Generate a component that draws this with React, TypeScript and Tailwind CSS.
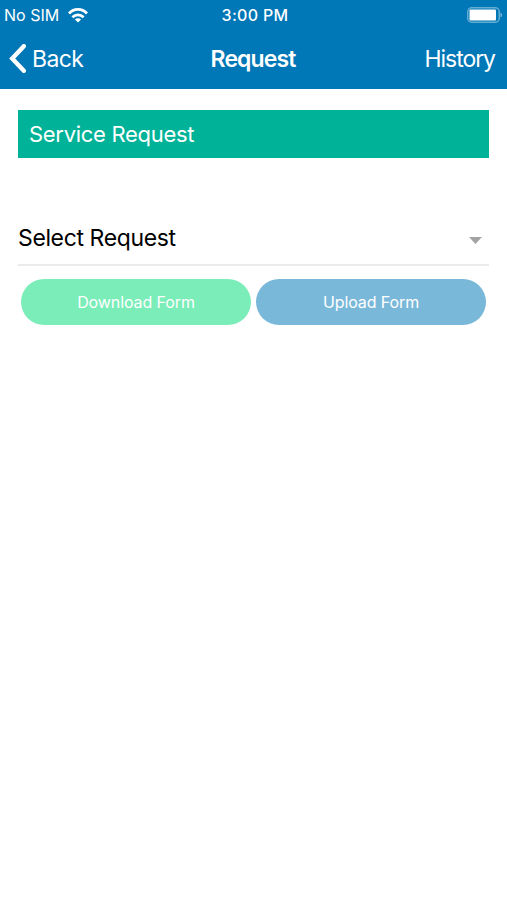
const WifiIcon = () => (
  <svg width="20" height="15" viewBox="0 0 20 15" fill="none" stroke="white" strokeWidth="2.8">
    <path d="M1 5.5C6 .1 14 .1 19 5.5" />
    <path d="M4.4 9.2c3.2-3.2 8-3.2 11.2 0" />
    <path d="M10 14.5 6.9 11.4c1.8-1.6 4.4-1.6 6.2 0z" fill="white" stroke="none" />
  </svg>
)

const BatteryIcon = () => (
  <svg width="36" height="16" viewBox="0 0 36 16" fill="none">
    <rect x="0.75" y="0.75" width="31.5" height="14.5" rx="4" stroke="white" strokeOpacity="0.4" strokeWidth="1.5" />
    <rect x="2.5" y="2.5" width="26.5" height="11" rx="1" fill="white" />
    <path d="M33.5 5.5c2.2.8 2.2 4.2 0 5z" fill="white" fillOpacity="0.45" />
  </svg>
)

const StatusBar = () => (
  <div className="grid h-[30px] grid-cols-3 items-center pr-[4px] pl-[4px] text-[16px]">
    <div className="flex items-center gap-[9px]">
      <span>No SIM</span>
      <WifiIcon />
    </div>
    <span className="pl-[3px] text-center font-medium tracking-[0.3px]">3:00 PM</span>
    <div className="flex justify-end">
      <BatteryIcon />
    </div>
  </div>
)

const NavBar = () => (
  <nav className="grid h-[58px] grid-cols-3 items-center pr-[12px] pl-[9px] text-[23px]">
    <button className="flex items-center gap-[6px] tracking-[-0.6px]">
      <svg
        className="mb-[2px]"
        width="17"
        height="29"
        viewBox="0 0 17 29"
        fill="none"
        stroke="white"
        strokeWidth="4.4"
        strokeLinecap="round"
      >
        <path d="M14.8 2.2 3.2 14.5l11.6 12.3" />
      </svg>
      Back
    </button>
    <h1 className="pl-[2px] text-center font-semibold tracking-[-0.9px]">Request</h1>
    <button className="text-right tracking-[-1.05px]">History</button>
  </nav>
)

const App = () => (
  <div className="min-h-screen bg-white font-['Inter',sans-serif]">
    <header className="h-[88.5px] bg-[#0077b6] text-white">
      <StatusBar />
      <NavBar />
    </header>
    <main className="px-[18px] pt-[21.5px]">
      <h2 className="flex h-[48px] items-center bg-[#00b398] pl-[11px] text-[22px] tracking-[-0.3px] text-white">
        Service Request
      </h2>
      <button className="mt-[53px] flex h-[55px] w-full items-center justify-between border-b-2 border-[#ebebeb] pt-[2px] pr-[7px] text-[23px] tracking-[-0.38px] text-black">
        Select Request
        <svg className="mt-[3px]" width="13" height="7" viewBox="0 0 13 7">
          <path d="M0 0h13L6.5 7z" fill="#a3a3a3" />
        </svg>
      </button>
      <div className="mt-[13px] grid grid-cols-2 gap-[5px] px-[3px] text-[16px] tracking-[-0.1px] text-white">
        <button className="h-[46px] rounded-full bg-[#7aedb8]">Download Form</button>
        <button className="h-[46px] rounded-full bg-[#7ab8da]">Upload Form</button>
      </div>
    </main>
  </div>
)

export default App
